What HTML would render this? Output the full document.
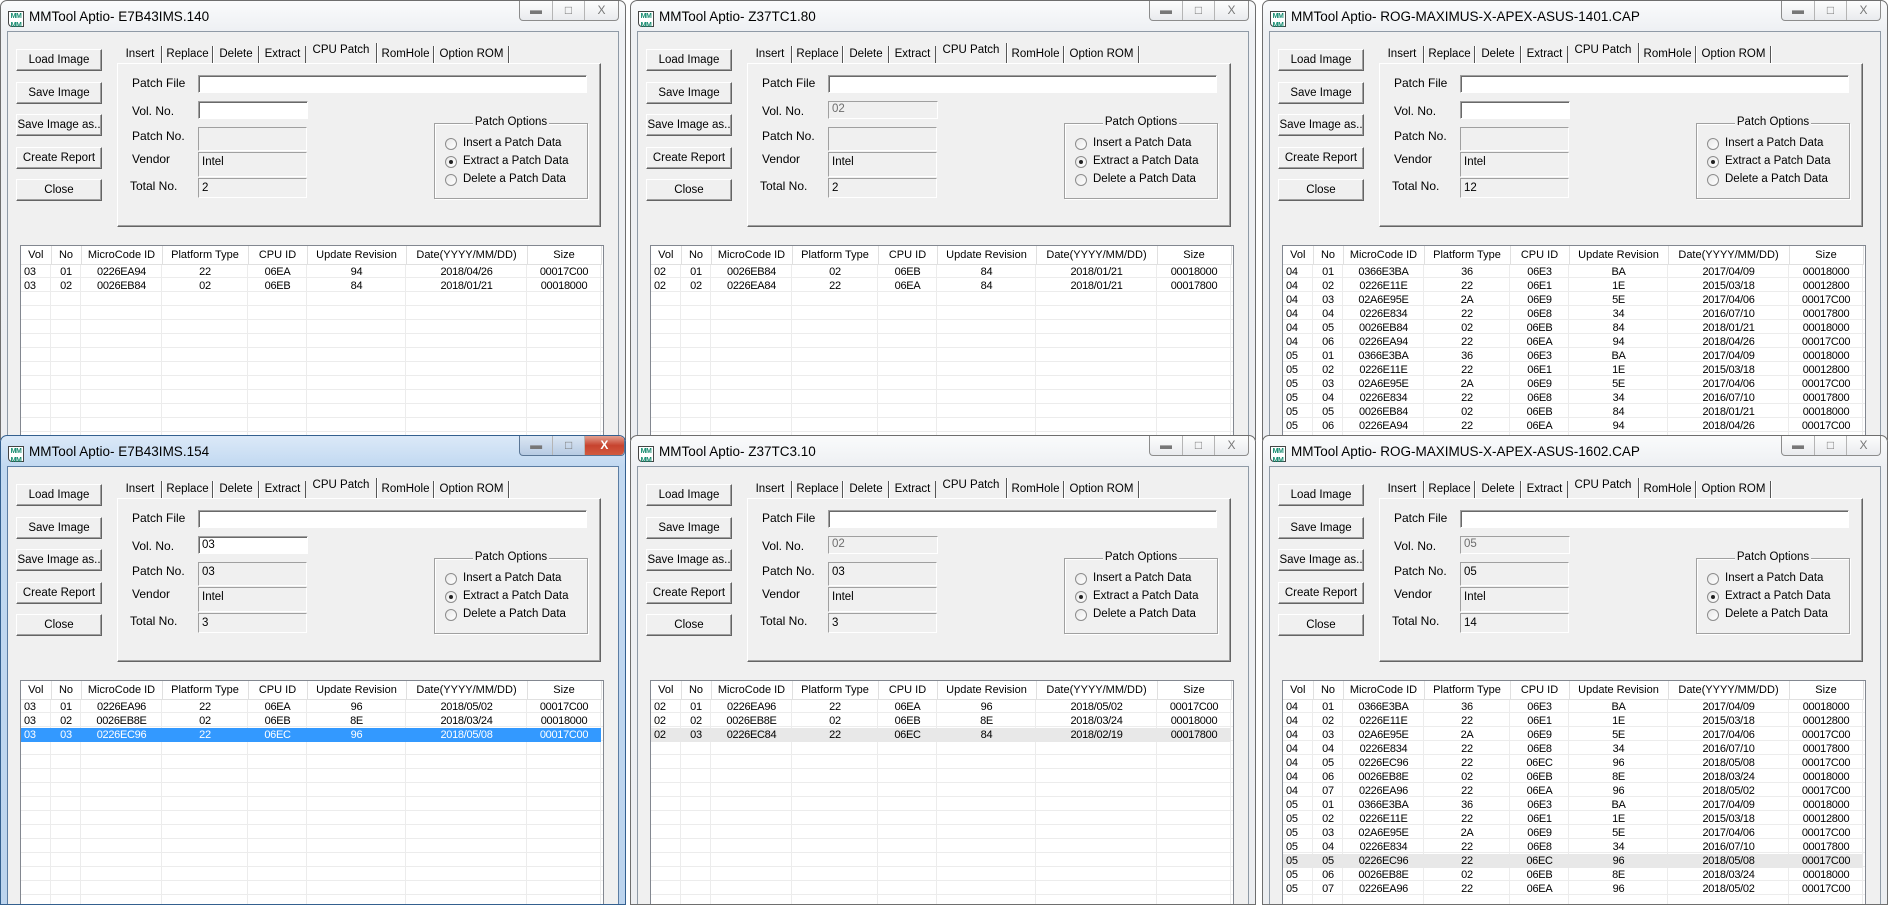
<!DOCTYPE html>
<html><head><meta charset="utf-8">
<style>
*{box-sizing:border-box}
body{margin:0;width:1888px;height:903px;overflow:hidden;background:#fff;position:relative;font-family:"Liberation Sans",sans-serif;font-size:12px;color:#000}
.win{position:absolute;width:626px;border:1px solid #6e6e6e;border-radius:7px 7px 0 0;overflow:hidden;background:linear-gradient(#fafbfc,#eef0f3 30px,#eceef1)}
.top{top:0;height:440px;z-index:1}
.bot{top:435px;height:470px;z-index:2}
.act{background:linear-gradient(#dbe9f8,#c2d9f1 30px,#bcd4ee);border-color:#34608f}
.win>*{position:absolute}
.cl{left:6px;top:30px;right:6px;bottom:-2px;background:#f0f0f0;border:1px solid #8f9aa6}
.act .cl{border-color:#5c7da3}
.ico{left:7px;top:10px;width:16px;height:16px;border:1px solid #444;background:#fff;font-size:7px;font-weight:bold;color:#138a6e;line-height:9px;text-align:center;letter-spacing:-0.5px;border-radius:0 0 0 4px}
.ttl{left:28px;top:8px;font-size:13.5px;white-space:nowrap}
.cap{left:518px;top:0;width:100px;height:20px;border:1px solid #8c8c8c;border-top:none;border-radius:0 0 4px 4px;background:linear-gradient(#fdfdfd,#e9ebee);display:flex}
.cap div{position:relative;height:100%;border-right:1px solid #b5b5b5;text-align:center;color:#777;font-size:12px;line-height:18px}
.cap div:last-child{border-right:none}
.act .cap{border-color:#5a7696;background:linear-gradient(#dbe6f3,#b7cbe3)}
.act .cap .x{background:linear-gradient(#e3a08f,#c7432f 50%,#d25a3f);color:#fff;font-weight:bold;border-radius:0 0 4px 0}
.b{left:15px;width:86px;height:22px;background:#f0f0f0;border:1px solid;border-color:#fff #646464 #646464 #fff;box-shadow:inset -1px -1px #a0a0a0;text-align:center;line-height:20px;font-size:11.5px;white-space:nowrap}
.tb{top:45px;height:17px;line-height:16px;text-align:center;border-right:1px solid #555;box-shadow:1px 0 #fff;font-size:11.5px;white-space:nowrap}
.tb.s{top:42px;height:20px;line-height:15px;border-right:1px solid #555;background:#f0f0f0;z-index:2}
.pn{left:116px;top:62px;width:484px;height:164px;border:1px solid;border-color:#fff #646464 #646464 #fff;box-shadow:inset -1px -1px #a0a0a0}
.lb{font-size:12px;white-space:nowrap}
.tx{border:1px solid;border-color:#a0a0a0 #fff #fff #a0a0a0;box-shadow:inset 1px 1px #696969;background:#fff;padding-left:3px;font-size:11.5px;line-height:16px}
.tx.g{background:#f0f0f0;box-shadow:none;line-height:18px}
.dis{color:#6d6d6d}
.gb{left:433px;top:122px;width:154px;height:76px;border:1px solid #a0a0a0;box-shadow:1px 1px #fff,inset 1px 1px #fff}
.lg{left:0;right:0;top:-8px;text-align:center;position:absolute;font-size:11.5px}
.lg span{background:#f0f0f0;padding:0 2px}
.rd{left:444px;width:12px;height:12px;border-radius:50%;border:1px solid #8d8d8d;background:linear-gradient(135deg,#e8e8e8,#fff)}
.rd.on:after{content:"";position:absolute;left:3px;top:3px;width:4px;height:4px;border-radius:50%;background:#222}
.rl{left:462px;font-size:11.5px;white-space:nowrap}
.grid{left:19px;top:244px;width:584px;bottom:0;border:1px solid #828790;border-bottom:none;background:
linear-gradient(90deg,transparent 29px,#ececec 29px 30px,transparent 30px 59px,#ececec 59px 60px,transparent 60px 140px,#ececec 140px 141px,transparent 141px 226px,#ececec 226px 227px,transparent 227px 285px,#ececec 285px 286px,transparent 286px 384px,#ececec 384px 385px,transparent 385px 505px,#ececec 505px 506px,transparent 506px 579px,#ececec 579px 580px,transparent 580px),
repeating-linear-gradient(180deg,transparent 0 13px,#ececec 13px 14px) 0 18px / 100% 100% no-repeat,#fff}
.grid table{border-collapse:collapse;table-layout:fixed;width:580px;position:relative}
.grid th{height:18px;font-weight:normal;font-size:11px;background:#fff;border-right:1px solid #e0e0e0;border-bottom:1px solid #e0e0e0;padding:0;white-space:nowrap;text-align:center}
.grid td{height:14px;line-height:14px;padding:0;font-size:11px;text-align:center;white-space:nowrap;letter-spacing:-0.3px}
.grid td:first-child{text-align:left;padding-left:3px}
tr.sel td{background:#3399ff;color:#fff}
tr.gs td{background:#e8e8e8}
</style></head><body>

<!-- WINDOW 1 -->
<div class="win top" style="left:0">
<div class="cl"></div>
<div class="ico">MM<br>MM</div>
<div class="ttl">MMTool Aptio- E7B43IMS.140</div>
<div class="cap"><div style="width:33px">&#9644;</div><div style="width:32px">&#9633;</div><div class="x" style="width:33px">X</div></div>
<div class="b" style="top:48px">Load Image</div><div class="b" style="top:81px">Save Image</div><div class="b" style="top:113px">Save Image as..</div><div class="b" style="top:146px">Create Report</div><div class="b" style="top:178px">Close</div>
<div class="pn"></div>
<div class="tb" style="left:118px;width:43px">Insert</div><div class="tb" style="left:162px;width:50px">Replace</div><div class="tb" style="left:213px;width:45px">Delete</div><div class="tb" style="left:259px;width:46px">Extract</div><div class="tb s" style="left:305px;width:71px">CPU Patch</div><div class="tb" style="left:377px;width:56px">RomHole</div><div class="tb" style="left:434px;width:74px">Option ROM</div>
<div class="lb" style="left:131px;top:75px">Patch File</div><div class="lb" style="left:131px;top:103px">Vol. No.</div><div class="lb" style="left:131px;top:128px">Patch No.</div><div class="lb" style="left:131px;top:151px">Vendor</div><div class="lb" style="left:129px;top:178px">Total No.</div>
<div class="tx" style="left:197px;top:74px;width:389px;height:18px"></div>
<div class="tx" style="left:197px;top:100px;width:110px;height:18px"></div>
<div class="tx g" style="left:197px;top:126px;width:109px;height:24px"></div>
<div class="tx g" style="left:197px;top:151px;width:109px;height:25px">Intel</div>
<div class="tx g" style="left:197px;top:177px;width:109px;height:20px">2</div>
<div class="gb"><div class="lg"><span>Patch Options</span></div></div>
<div class="rd" style="top:137px"></div><div class="rd on" style="top:155px"></div><div class="rd" style="top:173px"></div>
<div class="rl" style="top:136px">Insert a Patch Data</div><div class="rl" style="top:154px">Extract a Patch Data</div><div class="rl" style="top:172px">Delete a Patch Data</div>
<div class="grid"><table><colgroup><col style="width:30px"><col style="width:30px"><col style="width:81px"><col style="width:86px"><col style="width:59px"><col style="width:99px"><col style="width:121px"><col style="width:74px"></colgroup>
<tr><th>Vol</th><th>No</th><th>MicroCode ID</th><th>Platform Type</th><th>CPU ID</th><th>Update Revision</th><th>Date(YYYY/MM/DD)</th><th>Size</th></tr>
<tr><td>03</td><td>01</td><td>0226EA94</td><td>22</td><td>06EA</td><td>94</td><td>2018/04/26</td><td>00017C00</td></tr>
<tr><td>03</td><td>02</td><td>0026EB84</td><td>02</td><td>06EB</td><td>84</td><td>2018/01/21</td><td>00018000</td></tr>
</table></div>
</div>

<!-- WINDOW 2 -->
<div class="win top" style="left:630px">
<div class="cl"></div>
<div class="ico">MM<br>MM</div>
<div class="ttl">MMTool Aptio- Z37TC1.80</div>
<div class="cap"><div style="width:33px">&#9644;</div><div style="width:32px">&#9633;</div><div class="x" style="width:33px">X</div></div>
<div class="b" style="top:48px">Load Image</div><div class="b" style="top:81px">Save Image</div><div class="b" style="top:113px">Save Image as..</div><div class="b" style="top:146px">Create Report</div><div class="b" style="top:178px">Close</div>
<div class="pn"></div>
<div class="tb" style="left:118px;width:43px">Insert</div><div class="tb" style="left:162px;width:50px">Replace</div><div class="tb" style="left:213px;width:45px">Delete</div><div class="tb" style="left:259px;width:46px">Extract</div><div class="tb s" style="left:305px;width:71px">CPU Patch</div><div class="tb" style="left:377px;width:56px">RomHole</div><div class="tb" style="left:434px;width:74px">Option ROM</div>
<div class="lb" style="left:131px;top:75px">Patch File</div><div class="lb" style="left:131px;top:103px">Vol. No.</div><div class="lb" style="left:131px;top:128px">Patch No.</div><div class="lb" style="left:131px;top:151px">Vendor</div><div class="lb" style="left:129px;top:178px">Total No.</div>
<div class="tx" style="left:197px;top:74px;width:389px;height:18px"></div>
<div class="tx g dis" style="left:197px;top:100px;width:110px;height:18px;line-height:15px">02</div>
<div class="tx g" style="left:197px;top:126px;width:109px;height:24px"></div>
<div class="tx g" style="left:197px;top:151px;width:109px;height:25px">Intel</div>
<div class="tx g" style="left:197px;top:177px;width:109px;height:20px">2</div>
<div class="gb"><div class="lg"><span>Patch Options</span></div></div>
<div class="rd" style="top:137px"></div><div class="rd on" style="top:155px"></div><div class="rd" style="top:173px"></div>
<div class="rl" style="top:136px">Insert a Patch Data</div><div class="rl" style="top:154px">Extract a Patch Data</div><div class="rl" style="top:172px">Delete a Patch Data</div>
<div class="grid"><table><colgroup><col style="width:30px"><col style="width:30px"><col style="width:81px"><col style="width:86px"><col style="width:59px"><col style="width:99px"><col style="width:121px"><col style="width:74px"></colgroup>
<tr><th>Vol</th><th>No</th><th>MicroCode ID</th><th>Platform Type</th><th>CPU ID</th><th>Update Revision</th><th>Date(YYYY/MM/DD)</th><th>Size</th></tr>
<tr><td>02</td><td>01</td><td>0026EB84</td><td>02</td><td>06EB</td><td>84</td><td>2018/01/21</td><td>00018000</td></tr>
<tr><td>02</td><td>02</td><td>0226EA84</td><td>22</td><td>06EA</td><td>84</td><td>2018/01/21</td><td>00017800</td></tr>
</table></div>
</div>

<!-- WINDOW 3 -->
<div class="win top" style="left:1262px">
<div class="cl"></div>
<div class="ico">MM<br>MM</div>
<div class="ttl">MMTool Aptio- ROG-MAXIMUS-X-APEX-ASUS-1401.CAP</div>
<div class="cap"><div style="width:33px">&#9644;</div><div style="width:32px">&#9633;</div><div class="x" style="width:33px">X</div></div>
<div class="b" style="top:48px">Load Image</div><div class="b" style="top:81px">Save Image</div><div class="b" style="top:113px">Save Image as..</div><div class="b" style="top:146px">Create Report</div><div class="b" style="top:178px">Close</div>
<div class="pn"></div>
<div class="tb" style="left:118px;width:43px">Insert</div><div class="tb" style="left:162px;width:50px">Replace</div><div class="tb" style="left:213px;width:45px">Delete</div><div class="tb" style="left:259px;width:46px">Extract</div><div class="tb s" style="left:305px;width:71px">CPU Patch</div><div class="tb" style="left:377px;width:56px">RomHole</div><div class="tb" style="left:434px;width:74px">Option ROM</div>
<div class="lb" style="left:131px;top:75px">Patch File</div><div class="lb" style="left:131px;top:103px">Vol. No.</div><div class="lb" style="left:131px;top:128px">Patch No.</div><div class="lb" style="left:131px;top:151px">Vendor</div><div class="lb" style="left:129px;top:178px">Total No.</div>
<div class="tx" style="left:197px;top:74px;width:389px;height:18px"></div>
<div class="tx" style="left:197px;top:100px;width:110px;height:18px"></div>
<div class="tx g" style="left:197px;top:126px;width:109px;height:24px"></div>
<div class="tx g" style="left:197px;top:151px;width:109px;height:25px">Intel</div>
<div class="tx g" style="left:197px;top:177px;width:109px;height:20px">12</div>
<div class="gb"><div class="lg"><span>Patch Options</span></div></div>
<div class="rd" style="top:137px"></div><div class="rd on" style="top:155px"></div><div class="rd" style="top:173px"></div>
<div class="rl" style="top:136px">Insert a Patch Data</div><div class="rl" style="top:154px">Extract a Patch Data</div><div class="rl" style="top:172px">Delete a Patch Data</div>
<div class="grid"><table><colgroup><col style="width:30px"><col style="width:30px"><col style="width:81px"><col style="width:86px"><col style="width:59px"><col style="width:99px"><col style="width:121px"><col style="width:74px"></colgroup>
<tr><th>Vol</th><th>No</th><th>MicroCode ID</th><th>Platform Type</th><th>CPU ID</th><th>Update Revision</th><th>Date(YYYY/MM/DD)</th><th>Size</th></tr>
<tr><td>04</td><td>01</td><td>0366E3BA</td><td>36</td><td>06E3</td><td>BA</td><td>2017/04/09</td><td>00018000</td></tr>
<tr><td>04</td><td>02</td><td>0226E11E</td><td>22</td><td>06E1</td><td>1E</td><td>2015/03/18</td><td>00012800</td></tr>
<tr><td>04</td><td>03</td><td>02A6E95E</td><td>2A</td><td>06E9</td><td>5E</td><td>2017/04/06</td><td>00017C00</td></tr>
<tr><td>04</td><td>04</td><td>0226E834</td><td>22</td><td>06E8</td><td>34</td><td>2016/07/10</td><td>00017800</td></tr>
<tr><td>04</td><td>05</td><td>0026EB84</td><td>02</td><td>06EB</td><td>84</td><td>2018/01/21</td><td>00018000</td></tr>
<tr><td>04</td><td>06</td><td>0226EA94</td><td>22</td><td>06EA</td><td>94</td><td>2018/04/26</td><td>00017C00</td></tr>
<tr><td>05</td><td>01</td><td>0366E3BA</td><td>36</td><td>06E3</td><td>BA</td><td>2017/04/09</td><td>00018000</td></tr>
<tr><td>05</td><td>02</td><td>0226E11E</td><td>22</td><td>06E1</td><td>1E</td><td>2015/03/18</td><td>00012800</td></tr>
<tr><td>05</td><td>03</td><td>02A6E95E</td><td>2A</td><td>06E9</td><td>5E</td><td>2017/04/06</td><td>00017C00</td></tr>
<tr><td>05</td><td>04</td><td>0226E834</td><td>22</td><td>06E8</td><td>34</td><td>2016/07/10</td><td>00017800</td></tr>
<tr><td>05</td><td>05</td><td>0026EB84</td><td>02</td><td>06EB</td><td>84</td><td>2018/01/21</td><td>00018000</td></tr>
<tr><td>05</td><td>06</td><td>0226EA94</td><td>22</td><td>06EA</td><td>94</td><td>2018/04/26</td><td>00017C00</td></tr>
</table></div>
</div>

<!-- WINDOW 4 (active) -->
<div class="win bot act" style="left:0">
<div class="cl"></div>
<div class="ico">MM<br>MM</div>
<div class="ttl">MMTool Aptio- E7B43IMS.154</div>
<div class="cap" style="left:518px;width:106px"><div style="width:34px">&#9644;</div><div style="width:32px">&#9633;</div><div class="x" style="width:40px">X</div></div>
<div class="b" style="top:48px">Load Image</div><div class="b" style="top:81px">Save Image</div><div class="b" style="top:113px">Save Image as..</div><div class="b" style="top:146px">Create Report</div><div class="b" style="top:178px">Close</div>
<div class="pn"></div>
<div class="tb" style="left:118px;width:43px">Insert</div><div class="tb" style="left:162px;width:50px">Replace</div><div class="tb" style="left:213px;width:45px">Delete</div><div class="tb" style="left:259px;width:46px">Extract</div><div class="tb s" style="left:305px;width:71px">CPU Patch</div><div class="tb" style="left:377px;width:56px">RomHole</div><div class="tb" style="left:434px;width:74px">Option ROM</div>
<div class="lb" style="left:131px;top:75px">Patch File</div><div class="lb" style="left:131px;top:103px">Vol. No.</div><div class="lb" style="left:131px;top:128px">Patch No.</div><div class="lb" style="left:131px;top:151px">Vendor</div><div class="lb" style="left:129px;top:178px">Total No.</div>
<div class="tx" style="left:197px;top:74px;width:389px;height:18px"></div>
<div class="tx" style="left:197px;top:100px;width:110px;height:18px">03</div>
<div class="tx g" style="left:197px;top:126px;width:109px;height:24px">03</div>
<div class="tx g" style="left:197px;top:151px;width:109px;height:25px">Intel</div>
<div class="tx g" style="left:197px;top:177px;width:109px;height:20px">3</div>
<div class="gb"><div class="lg"><span>Patch Options</span></div></div>
<div class="rd" style="top:137px"></div><div class="rd on" style="top:155px"></div><div class="rd" style="top:173px"></div>
<div class="rl" style="top:136px">Insert a Patch Data</div><div class="rl" style="top:154px">Extract a Patch Data</div><div class="rl" style="top:172px">Delete a Patch Data</div>
<div class="grid"><table><colgroup><col style="width:30px"><col style="width:30px"><col style="width:81px"><col style="width:86px"><col style="width:59px"><col style="width:99px"><col style="width:121px"><col style="width:74px"></colgroup>
<tr><th>Vol</th><th>No</th><th>MicroCode ID</th><th>Platform Type</th><th>CPU ID</th><th>Update Revision</th><th>Date(YYYY/MM/DD)</th><th>Size</th></tr>
<tr><td>03</td><td>01</td><td>0226EA96</td><td>22</td><td>06EA</td><td>96</td><td>2018/05/02</td><td>00017C00</td></tr>
<tr><td>03</td><td>02</td><td>0026EB8E</td><td>02</td><td>06EB</td><td>8E</td><td>2018/03/24</td><td>00018000</td></tr>
<tr class="sel"><td>03</td><td>03</td><td>0226EC96</td><td>22</td><td>06EC</td><td>96</td><td>2018/05/08</td><td>00017C00</td></tr>
</table></div>
</div>

<!-- WINDOW 5 -->
<div class="win bot" style="left:630px">
<div class="cl"></div>
<div class="ico">MM<br>MM</div>
<div class="ttl">MMTool Aptio- Z37TC3.10</div>
<div class="cap"><div style="width:33px">&#9644;</div><div style="width:32px">&#9633;</div><div class="x" style="width:33px">X</div></div>
<div class="b" style="top:48px">Load Image</div><div class="b" style="top:81px">Save Image</div><div class="b" style="top:113px">Save Image as..</div><div class="b" style="top:146px">Create Report</div><div class="b" style="top:178px">Close</div>
<div class="pn"></div>
<div class="tb" style="left:118px;width:43px">Insert</div><div class="tb" style="left:162px;width:50px">Replace</div><div class="tb" style="left:213px;width:45px">Delete</div><div class="tb" style="left:259px;width:46px">Extract</div><div class="tb s" style="left:305px;width:71px">CPU Patch</div><div class="tb" style="left:377px;width:56px">RomHole</div><div class="tb" style="left:434px;width:74px">Option ROM</div>
<div class="lb" style="left:131px;top:75px">Patch File</div><div class="lb" style="left:131px;top:103px">Vol. No.</div><div class="lb" style="left:131px;top:128px">Patch No.</div><div class="lb" style="left:131px;top:151px">Vendor</div><div class="lb" style="left:129px;top:178px">Total No.</div>
<div class="tx" style="left:197px;top:74px;width:389px;height:18px"></div>
<div class="tx g dis" style="left:197px;top:100px;width:110px;height:18px;line-height:15px">02</div>
<div class="tx g" style="left:197px;top:126px;width:109px;height:24px">03</div>
<div class="tx g" style="left:197px;top:151px;width:109px;height:25px">Intel</div>
<div class="tx g" style="left:197px;top:177px;width:109px;height:20px">3</div>
<div class="gb"><div class="lg"><span>Patch Options</span></div></div>
<div class="rd" style="top:137px"></div><div class="rd on" style="top:155px"></div><div class="rd" style="top:173px"></div>
<div class="rl" style="top:136px">Insert a Patch Data</div><div class="rl" style="top:154px">Extract a Patch Data</div><div class="rl" style="top:172px">Delete a Patch Data</div>
<div class="grid"><table><colgroup><col style="width:30px"><col style="width:30px"><col style="width:81px"><col style="width:86px"><col style="width:59px"><col style="width:99px"><col style="width:121px"><col style="width:74px"></colgroup>
<tr><th>Vol</th><th>No</th><th>MicroCode ID</th><th>Platform Type</th><th>CPU ID</th><th>Update Revision</th><th>Date(YYYY/MM/DD)</th><th>Size</th></tr>
<tr><td>02</td><td>01</td><td>0226EA96</td><td>22</td><td>06EA</td><td>96</td><td>2018/05/02</td><td>00017C00</td></tr>
<tr><td>02</td><td>02</td><td>0026EB8E</td><td>02</td><td>06EB</td><td>8E</td><td>2018/03/24</td><td>00018000</td></tr>
<tr class="gs"><td>02</td><td>03</td><td>0226EC84</td><td>22</td><td>06EC</td><td>84</td><td>2018/02/19</td><td>00017800</td></tr>
</table></div>
</div>

<!-- WINDOW 6 -->
<div class="win bot" style="left:1262px">
<div class="cl"></div>
<div class="ico">MM<br>MM</div>
<div class="ttl">MMTool Aptio- ROG-MAXIMUS-X-APEX-ASUS-1602.CAP</div>
<div class="cap"><div style="width:33px">&#9644;</div><div style="width:32px">&#9633;</div><div class="x" style="width:33px">X</div></div>
<div class="b" style="top:48px">Load Image</div><div class="b" style="top:81px">Save Image</div><div class="b" style="top:113px">Save Image as..</div><div class="b" style="top:146px">Create Report</div><div class="b" style="top:178px">Close</div>
<div class="pn"></div>
<div class="tb" style="left:118px;width:43px">Insert</div><div class="tb" style="left:162px;width:50px">Replace</div><div class="tb" style="left:213px;width:45px">Delete</div><div class="tb" style="left:259px;width:46px">Extract</div><div class="tb s" style="left:305px;width:71px">CPU Patch</div><div class="tb" style="left:377px;width:56px">RomHole</div><div class="tb" style="left:434px;width:74px">Option ROM</div>
<div class="lb" style="left:131px;top:75px">Patch File</div><div class="lb" style="left:131px;top:103px">Vol. No.</div><div class="lb" style="left:131px;top:128px">Patch No.</div><div class="lb" style="left:131px;top:151px">Vendor</div><div class="lb" style="left:129px;top:178px">Total No.</div>
<div class="tx" style="left:197px;top:74px;width:389px;height:18px"></div>
<div class="tx g dis" style="left:197px;top:100px;width:110px;height:18px;line-height:15px">05</div>
<div class="tx g" style="left:197px;top:126px;width:109px;height:24px">05</div>
<div class="tx g" style="left:197px;top:151px;width:109px;height:25px">Intel</div>
<div class="tx g" style="left:197px;top:177px;width:109px;height:20px">14</div>
<div class="gb"><div class="lg"><span>Patch Options</span></div></div>
<div class="rd" style="top:137px"></div><div class="rd on" style="top:155px"></div><div class="rd" style="top:173px"></div>
<div class="rl" style="top:136px">Insert a Patch Data</div><div class="rl" style="top:154px">Extract a Patch Data</div><div class="rl" style="top:172px">Delete a Patch Data</div>
<div class="grid"><table><colgroup><col style="width:30px"><col style="width:30px"><col style="width:81px"><col style="width:86px"><col style="width:59px"><col style="width:99px"><col style="width:121px"><col style="width:74px"></colgroup>
<tr><th>Vol</th><th>No</th><th>MicroCode ID</th><th>Platform Type</th><th>CPU ID</th><th>Update Revision</th><th>Date(YYYY/MM/DD)</th><th>Size</th></tr>
<tr><td>04</td><td>01</td><td>0366E3BA</td><td>36</td><td>06E3</td><td>BA</td><td>2017/04/09</td><td>00018000</td></tr>
<tr><td>04</td><td>02</td><td>0226E11E</td><td>22</td><td>06E1</td><td>1E</td><td>2015/03/18</td><td>00012800</td></tr>
<tr><td>04</td><td>03</td><td>02A6E95E</td><td>2A</td><td>06E9</td><td>5E</td><td>2017/04/06</td><td>00017C00</td></tr>
<tr><td>04</td><td>04</td><td>0226E834</td><td>22</td><td>06E8</td><td>34</td><td>2016/07/10</td><td>00017800</td></tr>
<tr><td>04</td><td>05</td><td>0226EC96</td><td>22</td><td>06EC</td><td>96</td><td>2018/05/08</td><td>00017C00</td></tr>
<tr><td>04</td><td>06</td><td>0026EB8E</td><td>02</td><td>06EB</td><td>8E</td><td>2018/03/24</td><td>00018000</td></tr>
<tr><td>04</td><td>07</td><td>0226EA96</td><td>22</td><td>06EA</td><td>96</td><td>2018/05/02</td><td>00017C00</td></tr>
<tr><td>05</td><td>01</td><td>0366E3BA</td><td>36</td><td>06E3</td><td>BA</td><td>2017/04/09</td><td>00018000</td></tr>
<tr><td>05</td><td>02</td><td>0226E11E</td><td>22</td><td>06E1</td><td>1E</td><td>2015/03/18</td><td>00012800</td></tr>
<tr><td>05</td><td>03</td><td>02A6E95E</td><td>2A</td><td>06E9</td><td>5E</td><td>2017/04/06</td><td>00017C00</td></tr>
<tr><td>05</td><td>04</td><td>0226E834</td><td>22</td><td>06E8</td><td>34</td><td>2016/07/10</td><td>00017800</td></tr>
<tr class="gs"><td>05</td><td>05</td><td>0226EC96</td><td>22</td><td>06EC</td><td>96</td><td>2018/05/08</td><td>00017C00</td></tr>
<tr><td>05</td><td>06</td><td>0026EB8E</td><td>02</td><td>06EB</td><td>8E</td><td>2018/03/24</td><td>00018000</td></tr>
<tr><td>05</td><td>07</td><td>0226EA96</td><td>22</td><td>06EA</td><td>96</td><td>2018/05/02</td><td>00017C00</td></tr>
</table></div>
</div>

</body></html>
